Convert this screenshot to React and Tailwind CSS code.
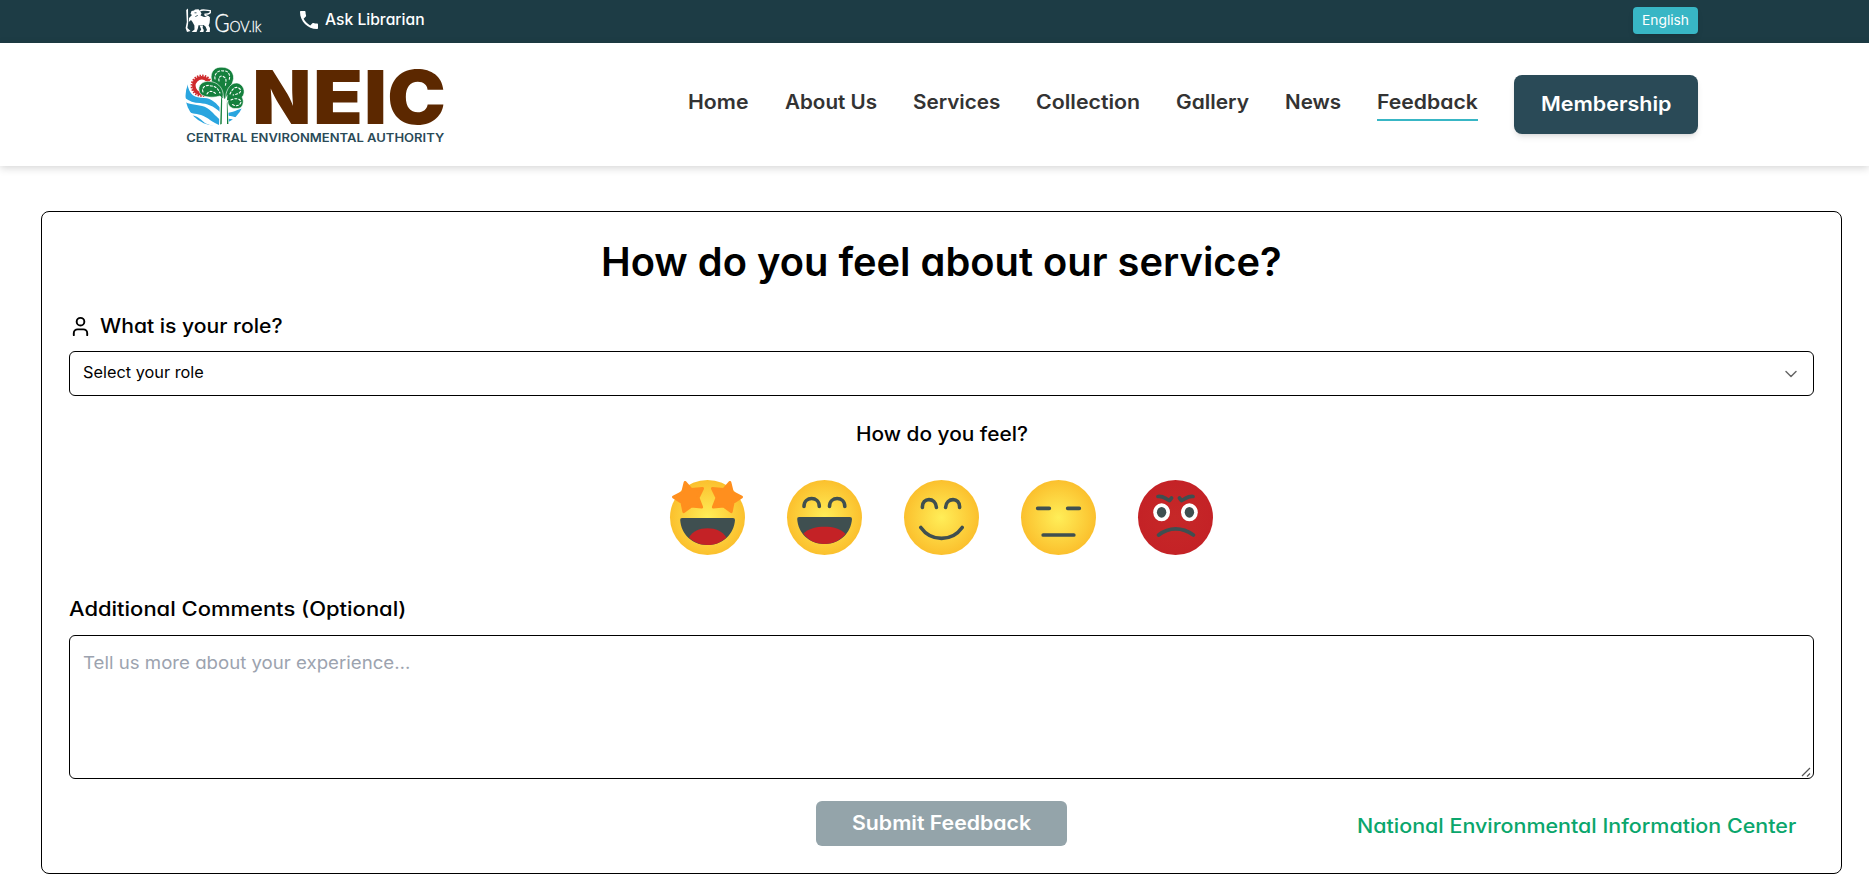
import { useLayoutEffect, useRef, useState } from "react";
import { ChevronDown, User } from "lucide-react";
import { MdPhone } from "react-icons/md";

/* Stretches a single line so that it fills the width of its box. */
function FitText({ children, className }) {
  const box = useRef(null);
  const line = useRef(null);
  const [scale, setScale] = useState(1);
  useLayoutEffect(() => {
    setScale(box.current.offsetWidth / line.current.offsetWidth);
  }, [children]);
  return (
    <span ref={box} className={`block whitespace-nowrap ${className}`}>
      <span ref={line} className="inline-block origin-left" style={{ transform: `scaleX(${scale})` }}>{children}</span>
    </span>
  );
}

function GovLogo() {
  return (
    <svg width="80" height="28" viewBox="0 0 80 28" className="shrink-0 overflow-visible" fill="#fff">
      <path d="M1.2 4 L3 2.5 L3.2 17 L2.4 22 L5.5 25 L2 26 L0.6 22 L1.8 16Z" />
      <path d="M4 12 L7 9 L5.5 8 L6.5 5 L9 4.5 L10 3.4 L13.5 3.2 L15 5 L16.5 7.5 L15.5 9.5 L19 11 L23 10.5 L25 12.5 L24.6 17 L23.6 19.5 L25 22 L24.8 26 L20.6 26 L22 24 L20.5 20.5 L18.5 19 L13.5 19.2 L13 22 L11.5 26 L6.6 26 L9.5 23.5 L9.4 19.5 L7.5 16 L6 14 L3.8 16Z" />
      <path d="M15 5.2 C17 2.6 20 4.8 25.3 4.6 C26 7 24 8.4 20 8.2 C19.2 10 23 9.4 24.6 11.8" fill="none" stroke="#fff" strokeWidth="1.3" />
      <path d="M14.6 19.5 L18 19.5 L17.6 22 L18.8 24 L18.4 26 L14.6 26 L16.2 23.6Z" />
      <path d="M9.5 6.8h2M12.8 9.4l-2.5 1.2" stroke="#1d3c45" strokeWidth="0.8" />
      <text x="29.5" y="26" fontFamily="Lato" fontSize="24.5" fontWeight="300" textLength="15" lengthAdjust="spacingAndGlyphs" stroke="#fff" strokeWidth="0.4">G</text>
      <text x="44.5" y="26" fontFamily="Lato" fontSize="15.5" fontWeight="300" textLength="32" lengthAdjust="spacingAndGlyphs" stroke="#fff" strokeWidth="0.3">OV.lk</text>
    </svg>
  );
}

function NeicLogo() {
  return (
    <svg width="262" height="84" viewBox="0 0 262 84" className="shrink-0 overflow-visible">
      <defs>
        <clipPath id="globe"><circle cx="30" cy="29" r="29.5" /></clipPath>
      </defs>
      <circle cx="16.8" cy="18.8" r="8" fill="none" stroke="#cf2a2c" strokeWidth="3.6" />
      <circle cx="16.8" cy="18.8" r="10.3" fill="none" stroke="#cf2a2c" strokeWidth="1.8" strokeDasharray="1.5 1.2" />
      <g clipPath="url(#globe)" fill="#2aa5df">
        <path d="M0 14 L2.5 17 C4 28 10 31 19 31 C27 31 32 37 36 42 L36 46 C28 38 22 37 15 36 C9 36 4 34 0 31Z" />
        <path d="M0 35 C8 39 16 37 22 41 C28 45 32 51 37 54 L37 59 C27 56 23 50 16 48 C10 46 6 47 2 44Z" />
        <path d="M4 48 C12 48 15 52 20 56 C24 58 28 59 34 60 L20 62Z" />
        <path d="M41 46 C48 46 52 42 60 41 L57 50 C50 52 47 48 41 49Z" />
        <path d="M41 52 C47 51 49 54 55 53 L45 60 L41 60Z" />
      </g>
      <path d="M36 29 L35 58 L43 58 L42 35Z" fill="#fff" stroke="#fff" strokeWidth="2" />
      <g fill="#15803d" stroke="#fff" strokeWidth="0.6">
        <path d="M26.5 13 C24.5 4 31 -0.5 37 0.2 C45 0 50.5 7 48 14 C47 18 44 22 42 25 L42 32 L38 32 C37 26 34 22 30 19 C27 17 26.5 15 26.5 13Z" />
        <path d="M35 29 C26 31.5 16 30 14.4 25 C12 18 18 13.5 25 14.5 C32 15 37 20 38 26 L39 33Z" />
        <path d="M41 27 C43 19 48 14.5 54 16.5 C60 19.5 60.5 27 57 30 C60 35 57.5 42 52 41.5 C45 42.5 42 37 43 33 L40 38Z" />
      </g>
      <path d="M36.3 28 L37.2 33 L36.7 57 L35.2 57.5 L36 34Z M42.4 35 L43.4 57 L42 57 L41.6 36Z" fill="#15803d" />
      <g fill="none" stroke="#fff" strokeWidth="1.1" strokeLinecap="round" strokeDasharray="2 2">
        <path d="M30 12 C29 6 34 3 38 4 C43 3 46 8 44 13" />
        <path d="M34 14 C33 9 37 8 39 10 C42 11 41 16 40 20" />
        <path d="M18 25 C16 20 22 17 26 19 C31 19 33 22 35 26" />
        <path d="M22 27 C24 23 28 24 31 27" />
        <path d="M45 27 C48 20 52 19 55 22 C57 26 53 27 48 28" />
        <path d="M46 33 C50 31 55 31 56 35 C55 39 50 40 47 37" />
      </g>
      <path d="M37.6 28 L39.5 33 L42.5 27.5 L41.5 38 L42 56 L37.2 57 L38 37Z" fill="#fff" />
      <g fill="#5c2800" fontFamily="Inter" fontWeight="900" fontSize="74.6">
        <text x="67.5" y="56.8" textLength="58.8" lengthAdjust="spacingAndGlyphs">N</text>
        <text x="128" y="56.8" textLength="50" lengthAdjust="spacingAndGlyphs">E</text>
        <text x="179" y="56.8" textLength="23" lengthAdjust="spacingAndGlyphs">I</text>
        <text x="202.2" y="56.8" textLength="58.6" lengthAdjust="spacingAndGlyphs">C</text>
      </g>
      <text x="1.2" y="75" fill="#2a4a57" fontFamily="Inter" fontWeight="600" fontSize="11.5" textLength="258" lengthAdjust="spacingAndGlyphs">CENTRAL ENVIRONMENTAL AUTHORITY</text>
    </svg>
  );
}

const nav = [
  ["Home", "w-[61px]"],
  ["About Us", "w-[92px]"],
  ["Services", "w-[87px]"],
  ["Collection", "w-[104px]"],
  ["Gallery", "w-[73px]"],
  ["News", "w-[56px]"],
];

function Face({ mood }) {
  const red = mood === "angry";
  return (
    <svg width="75" height="75" viewBox="0 0 75 75" className="overflow-visible">
      <defs>
        <radialGradient id={`skin-${mood}`}>
          <stop offset="0" stopColor={red ? "#c62828" : "#ffee58"} />
          <stop offset="1" stopColor={red ? "#c42226" : "#fbc02d"} />
        </radialGradient>
      </defs>
      <circle cx="37.5" cy="37.5" r="37.5" fill={`url(#skin-${mood})`} />
      {mood === "amazed" && (
        <>
          <g fill="#ff8f1e" stroke="#ff8f1e" strokeWidth="3" strokeLinejoin="round">
            <path d="M15.1 2.5 L21.2 9.5 L32.5 8.5 L28 17.8 L31.6 27 L21.4 26 L13.8 31.6 L12 22.6 L3.5 17 L12.7 12.4Z" />
            <path d="M59.9 2.5 L53.8 9.5 L42.5 8.5 L47 17.8 L43.4 27 L53.6 26 L61.2 31.6 L63 22.6 L71.5 17 L62.3 12.4Z" />
          </g>
          <path d="M12 38 H63 Q65 38 65 40 C64 54 53 65 37.5 65 C22 65 11 54 10.2 40 Q10 38 12 38Z" fill="#3f4f50" />
          <path d="M19 57.5 C23 51 29 48.3 37.5 48.3 C46 48.3 52 51 56.4 57.5 C51 62.5 45 65 37.5 65 C30 65 24 62.3 19 57.5Z" fill="#c42226" />
        </>
      )}
      {mood === "laughing" && (
        <>
          <path d="M12 37 H63 Q65 37 65 39 C64 53 53 64 37.5 64 C22 64 11 53 10.2 39 Q10 37 12 37Z" fill="#3f4f50" />
          <path d="M16.3 53.5 C22 48.5 29 46.8 37.5 46.8 C46 46.8 53 48.6 58.6 54 C53 60.5 46 64 37.5 64 C29 64 21.5 60.5 16.3 53.5Z" fill="#c42226" />
          <path d="M17 26.5 C17 15.8 32.3 15.8 32.3 26.5 M42.5 26.5 C42.5 15.8 57.8 15.8 57.8 26.5" fill="none" stroke="#3f4f50" strokeWidth="3.6" strokeLinecap="round" />
        </>
      )}
      {mood === "smiling" && (
        <path d="M18.4 27.4 C17.8 17 31.8 17 32.4 27.4 M41.6 27.4 C42.2 17 56.2 17 55.6 27.4 M16.8 47.5 C27 62 48 62 58.2 47.5" fill="none" stroke="#3f4f50" strokeWidth="3.6" strokeLinecap="round" />
      )}
      {mood === "neutral" && (
        <path d="M16.7 28.3 H28.3 M46.7 28.3 H58.3 M22.2 55 H52.8" fill="none" stroke="#3f4f50" strokeWidth="3.7" strokeLinecap="round" />
      )}
      {red && (
        <>
          <ellipse cx="23.6" cy="32.3" rx="8.4" ry="9" fill="#fff" />
          <ellipse cx="51.4" cy="32.3" rx="8.4" ry="9" fill="#fff" />
          <ellipse cx="23.6" cy="32.3" rx="4.7" ry="5.4" fill="#3f4f50" />
          <ellipse cx="51.4" cy="32.3" rx="4.7" ry="5.4" fill="#3f4f50" />
          <path d="M20 16.5 C26 16 26.5 18.5 31.5 20.5 L33.5 18 M55 16.5 C49 16 48.5 18.5 43.5 20.5 L41.5 18 M20.6 55 C31 46.8 44 46.8 55.4 55" fill="none" stroke="#3f4f50" strokeWidth="3.7" strokeLinecap="round" strokeLinejoin="round" />
        </>
      )}
    </svg>
  );
}

export default function App() {
  return (
    <div className="flex h-[886px] w-full flex-col overflow-hidden bg-white font-['Inter',sans-serif] text-black [font-feature-settings:'cv11','ss03']">
      <div className="flex h-[43px] shrink-0 items-start justify-between bg-[#1d3c45] pr-[171px] pl-[185px] text-white">
        <div className="flex">
          <div className="pt-[6px]"><GovLogo /></div>
          <div className="flex pl-[32px]">
            <MdPhone className="mt-[8px] size-[24px]" />
            <FitText className="mt-[8px] ml-[4px] w-[100px] text-[15.5px] leading-6 font-medium">Ask Librarian</FitText>
          </div>
        </div>
        <button className="mt-[7px] h-[27px] w-[65px] rounded bg-[#38b6c5] px-[9px] text-left shadow-md">
          <FitText className="w-[47px] text-[13.5px] leading-[25px]">English</FitText>
        </button>
      </div>

      <header className="flex h-[123px] shrink-0 items-start justify-between bg-white pr-[171px] pl-[185px] shadow-[0_2px_8px_rgba(0,0,0,0.17)]">
        <div className="pt-[24px]"><NeicLogo /></div>
        <div className="flex items-start">
          <nav className="flex gap-9 pt-[44px] text-[19.5px] leading-[30px] font-semibold text-[#333]">
            {nav.map(([label, width]) => (
              <FitText key={label} className={width}>{label}</FitText>
            ))}
            <div className="h-[34px] border-b-2 border-[#38b6c5]">
              <FitText className="w-[101px]">Feedback</FitText>
            </div>
          </nav>
          <button className="mt-8 ml-9 h-[59px] w-[184px] rounded-lg bg-[#2a4a57] pl-[27px] text-left text-white shadow-md">
            <FitText className="w-[130px] pb-[2px] text-[19.5px] leading-[54px] font-semibold">Membership</FitText>
          </button>
        </div>
      </header>

      <main className="mt-[45px] mr-[27px] ml-[41px] flex h-[663px] shrink-0 flex-col rounded-lg border border-black px-[27px]">
        <h1 className="mt-[25px] flex justify-center">
          <FitText className="w-[681px] text-[39.5px] leading-[50px] font-semibold">How do you feel about our service?</FitText>
        </h1>
        <div className="mt-[24px] flex h-[30px] items-start">
          <User className="mt-[4px] size-[23px]" />
          <FitText className="ml-[8px] w-[182px] text-[19.5px] leading-[30px] font-medium">What is your role?</FitText>
        </div>
        <div className="mt-[10px] flex h-[45px] items-start justify-between rounded-md border border-black pr-[12px] pl-[13px]">
          <FitText className="mt-[9px] w-[121px] text-[15.5px] leading-6">Select your role</FitText>
          <ChevronDown className="mt-[12px] size-5 opacity-60" strokeWidth={1.7} />
        </div>
        <div className="mt-[23px] flex justify-center">
          <FitText className="w-[172px] text-[19.5px] leading-[30px] font-medium">How do you feel?</FitText>
        </div>
        <div className="mt-[31px] flex justify-center gap-[42px]">
          <Face mood="amazed" />
          <Face mood="laughing" />
          <Face mood="smiling" />
          <Face mood="neutral" />
          <Face mood="angry" />
        </div>
        <FitText className="mt-[39px] w-[338px] text-[19.5px] leading-[30px] font-medium">Additional Comments (Optional)</FitText>
        <div className="mt-[11px] flex h-[144px] items-start justify-between rounded-md border border-black pl-[13px]">
          <FitText className="mt-[13px] w-[327px] text-[17.5px] leading-7 text-[#9ca3af]">Tell us more about your experience…</FitText>
          <svg width="12" height="12" viewBox="0 0 12 12" className="self-end" fill="none" stroke="#555" strokeWidth="1.2">
            <path d="M1 10 L9 2 M6 10.5 L9 7.5" />
          </svg>
        </div>
        <div className="mt-[22px] grid grid-cols-[1fr_251px_1fr] items-start">
          <span />
          <button className="h-[45px] rounded-md bg-[#94a4aa] pl-[36px] text-left text-white">
            <FitText className="w-[179px] pb-[2px] text-[19.5px] leading-[40px] font-semibold">Submit Feedback</FitText>
          </button>
          <div className="flex justify-end pr-[18px]">
            <FitText className="mt-[10px] w-[439px] text-[19.5px] leading-[30px] font-medium text-[#0aa66c]">National Environmental Information Center</FitText>
          </div>
        </div>
      </main>
    </div>
  );
}
